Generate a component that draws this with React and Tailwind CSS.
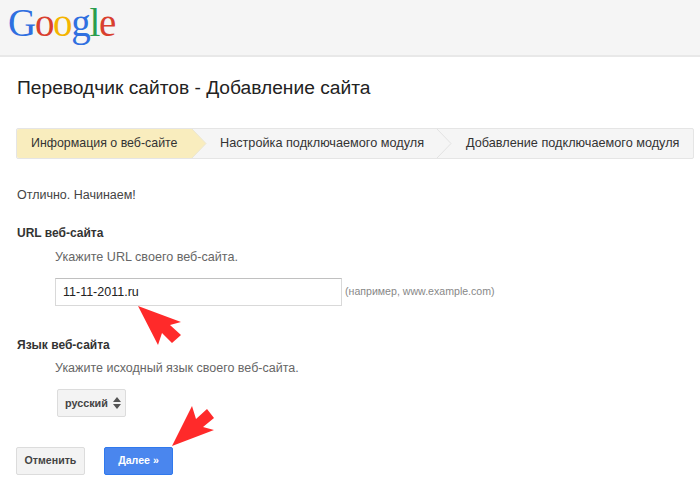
const font = { fontFamily: '"Liberation Sans", Arial, sans-serif' }

function Logo() {
  return (
    <div className="font-['Liberation_Serif',serif] text-[39px] leading-none tracking-[-1.3px] select-none pt-[3px]">
      <span className="text-[#2f6fe0]">G</span>
      <span className="text-[#d9402f]">o</span>
      <span className="text-[#f4b400]">o</span>
      <span className="text-[#2f6fe0]">g</span>
      <span className="text-[#2a9d4e]">l</span>
      <span className="text-[#d9402f]">e</span>
    </div>
  )
}

function Chevron({ fill, stroke }) {
  return (
    <svg className="absolute left-[-1px] top-0 z-10" width="16" height="29" viewBox="0 0 16 29">
      <path d="M0 0 L14 14.5 L0 29 Z" fill={fill} />
      <path d="M0 0 L14 14.5 L0 29" fill="none" stroke={stroke} strokeWidth="1" />
    </svg>
  )
}

function Steps() {
  return (
    <div className="flex h-[31px] w-[678px] rounded-[2px] border border-[#e5e5e5] bg-[#f5f5f5] text-[12.7px] text-[#333]">
      <div className="flex w-[176px] items-center rounded-l-[2px] bg-[#f9edbe] pl-[14px] text-[12.4px]">
        Информация о веб-сайте
      </div>
      <div className="relative flex w-[245px] items-center pl-[27px]">
        <Chevron fill="#f9edbe" stroke="#ebe6d0" />
        Настройка подключаемого модуля
      </div>
      <div className="relative flex flex-1 items-center pl-[28px]">
        <Chevron fill="#f5f5f5" stroke="#e2e2e2" />
        Добавление подключаемого модуля
      </div>
    </div>
  )
}

export default function App() {
  return (
    <div className="relative h-[489px] w-[700px] overflow-hidden bg-white text-[#333]" style={font}>
      <div className="h-[57px] border-b-2 border-[#e8e8e8] bg-[#f5f5f5] pl-[8px]">
        <Logo />
      </div>

      <div className="px-[16px]">
        <h1 className="mt-[19px] pl-[1px] text-[19.2px] leading-[24px] font-normal text-[#222]">
          Переводчик сайтов - Добавление сайта
        </h1>

        <div className="mt-[28px]">
          <Steps />
        </div>

        <p className="mt-[28px] pl-[1px] text-[12.5px] leading-[16px] text-[#444]">Отлично. Начинаем!</p>

        <h2 className="mt-[22px] pl-[1px] text-[12px] leading-[16px] font-bold text-[#333]">URL веб-сайта</h2>
        <p className="mt-[8px] pl-[39px] text-[12.6px] leading-[16px] text-[#666]">Укажите URL своего веб-сайта.</p>

        <div className="mt-[13px] flex items-center pl-[39px]">
          <div className="flex h-[28px] w-[287px] items-center border border-[#d9d9d9] border-t-[#c0c0c0] bg-white pl-[7px] text-[12.5px] text-[#222]">
            11-11-2011.ru
          </div>
          <span className="ml-[3px] text-[10.6px] text-[#888]">(например, www.example.com)</span>
        </div>

        <h2 className="mt-[31px] pl-[1px] text-[12px] leading-[16px] font-bold text-[#333]">Язык веб-сайта</h2>
        <p className="mt-[7px] pl-[39px] text-[12.5px] leading-[16px] text-[#666]">Укажите исходный язык своего веб-сайта.</p>

        <div className="mt-[13px] pl-[41px]">
          <div className="flex h-[28px] w-[69px] items-center gap-[5px] rounded-[2px] border border-[#dcdcdc] bg-[#f3f3f3] pl-[7px] text-[10.8px] font-bold text-[#444]">
            русский
            <svg width="8" height="12" viewBox="0 0 8 12">
              <path d="M4 0 L8 5 L0 5 Z M0 7 L8 7 L4 12 Z" fill="#555" />
            </svg>
          </div>
        </div>

        <div className="mt-[30px] flex gap-[19px]">
          <button className="h-[28px] w-[69px] rounded-[2px] border border-[#dcdcdc] bg-[#f3f3f3] text-[10.6px] font-bold text-[#444]">
            Отменить
          </button>
          <button className="h-[28px] w-[69px] rounded-[2px] border border-[#3079ed] bg-[#4a86ee] text-[10.6px] font-bold text-white">
            Далее »
          </button>
        </div>
      </div>

      {/* red annotation arrows drawn over the page */}
      <svg className="absolute inset-0 z-20" width="700" height="489" viewBox="0 0 700 489">
        <path d="M138 306 L181 322 L170 325 L181 335 L172 343 L162 333 L158 345 Z" fill="#ff2a2a" />
        <path d="M172 446 L192 406 L196 419 L207 409 L214 418 L203 427 L214 430 Z" fill="#ff2a2a" />
      </svg>
    </div>
  )
}
